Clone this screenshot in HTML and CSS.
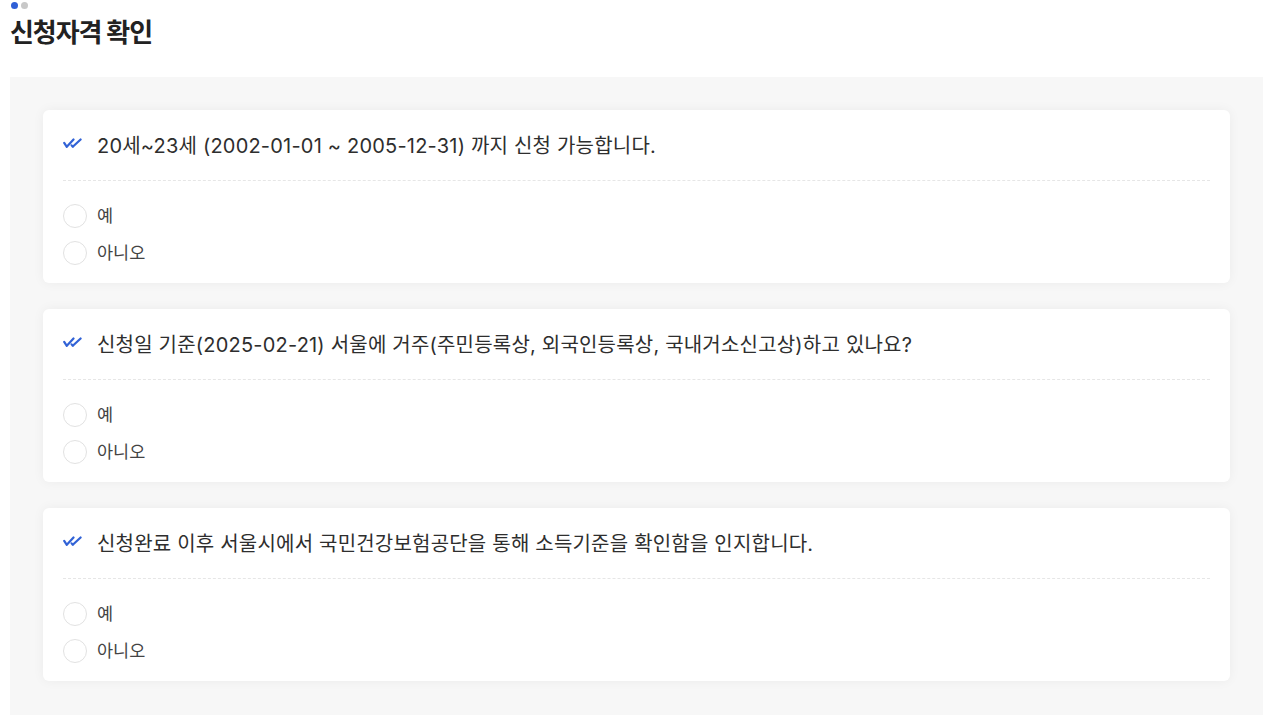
FILE: index.html
```html
<!DOCTYPE html>
<html lang="ko">
<head>
  <meta charset="UTF-8">
  <meta name="viewport" content="width=device-width, initial-scale=1.0">
  <title>신청자격 확인</title>
  <link rel="stylesheet" href="styles.css">
</head>
<body>
  <div class="steps">
    <span class="dot active"></span>
    <span class="dot"></span>
  </div>
  <h2 class="page-title">신청자격 확인</h2>

  <section class="qualify">
    <div class="card">
      <div class="question">
        <svg class="check" viewBox="0 0 20 11" width="20" height="11"><path d="M1.2 4.8l2.6 4L10.5 1.5M8.6 7.4l1.2 1.4L17.6 1.5" fill="none" stroke="#3162d6" stroke-width="2.2" stroke-linecap="round" stroke-linejoin="round"/></svg>
        <p>20세~23세 (2002-01-01 ~ 2005-12-31) 까지 신청 가능합니다.</p>
      </div>
      <div class="options">
        <label class="option"><span class="radio"></span>예</label>
        <label class="option"><span class="radio"></span>아니오</label>
      </div>
    </div>

    <div class="card">
      <div class="question">
        <svg class="check" viewBox="0 0 20 11" width="20" height="11"><path d="M1.2 4.8l2.6 4L10.5 1.5M8.6 7.4l1.2 1.4L17.6 1.5" fill="none" stroke="#3162d6" stroke-width="2.2" stroke-linecap="round" stroke-linejoin="round"/></svg>
        <p>신청일 기준(2025-02-21) 서울에 거주(주민등록상, 외국인등록상, 국내거소신고상)하고 있나요?</p>
      </div>
      <div class="options">
        <label class="option"><span class="radio"></span>예</label>
        <label class="option"><span class="radio"></span>아니오</label>
      </div>
    </div>

    <div class="card">
      <div class="question">
        <svg class="check" viewBox="0 0 20 11" width="20" height="11"><path d="M1.2 4.8l2.6 4L10.5 1.5M8.6 7.4l1.2 1.4L17.6 1.5" fill="none" stroke="#3162d6" stroke-width="2.2" stroke-linecap="round" stroke-linejoin="round"/></svg>
        <p>신청완료 이후 서울시에서 국민건강보험공단을 통해 소득기준을 확인함을 인지합니다.</p>
      </div>
      <div class="options">
        <label class="option"><span class="radio"></span>예</label>
        <label class="option"><span class="radio"></span>아니오</label>
      </div>
    </div>
  </section>
</body>
</html>
```

FILE: styles.css
```css
body {
  margin: 0;
  padding: 2px 7px 0 10px;
  background-color: #fff;
  color: #333;
  font-family: Inter, "Noto Sans CJK KR", "Noto Sans", sans-serif;
}
.steps {
  display: flex;
  gap: 3px;
  padding-left: 1px;
}
.dot {
  width: 7px;
  height: 7px;
  border-radius: 50%;
  background-color: #c8c8c8;
}
.dot.active {
  background-color: #2f5fd6;
}
.page-title {
  font-size: 26px;
  font-weight: 700;
  letter-spacing: -1.1px;
  color: #222;
  line-height: 34px;
  margin: 7px 0 27px;
}
.qualify {
  background-color: #f7f7f7;
  padding: 33px 33px 34px;
  display: flex;
  flex-direction: column;
  gap: 26px;
}
.card {
  background-color: #fff;
  border-radius: 6px;
  box-shadow: 0 0 12px rgba(0, 0, 0, 0.05);
  padding: 22px 20px 18px;
}
.question {
  display: flex;
  align-items: center;
  gap: 14px;
  padding-bottom: 20px;
  border-bottom: 1px dashed #e6e6e6;
}
.check {
  flex: none;
  margin-top: -6px;
}
.question p {
  margin: 0;
  font-size: 20px;
  line-height: 28px;
  letter-spacing: 0.2px;
  color: #2e2e2e;
}
.options {
  display: flex;
  flex-direction: column;
  gap: 13px;
  padding-top: 23px;
}
.option {
  display: flex;
  align-items: center;
  gap: 10px;
  font-size: 17.5px;
  line-height: 24px;
  letter-spacing: 0;
  color: #444;
}
.radio {
  width: 22px;
  height: 22px;
  border: 1px solid #e2e2e2;
  border-radius: 50%;
  background-color: #fff;
}
```
